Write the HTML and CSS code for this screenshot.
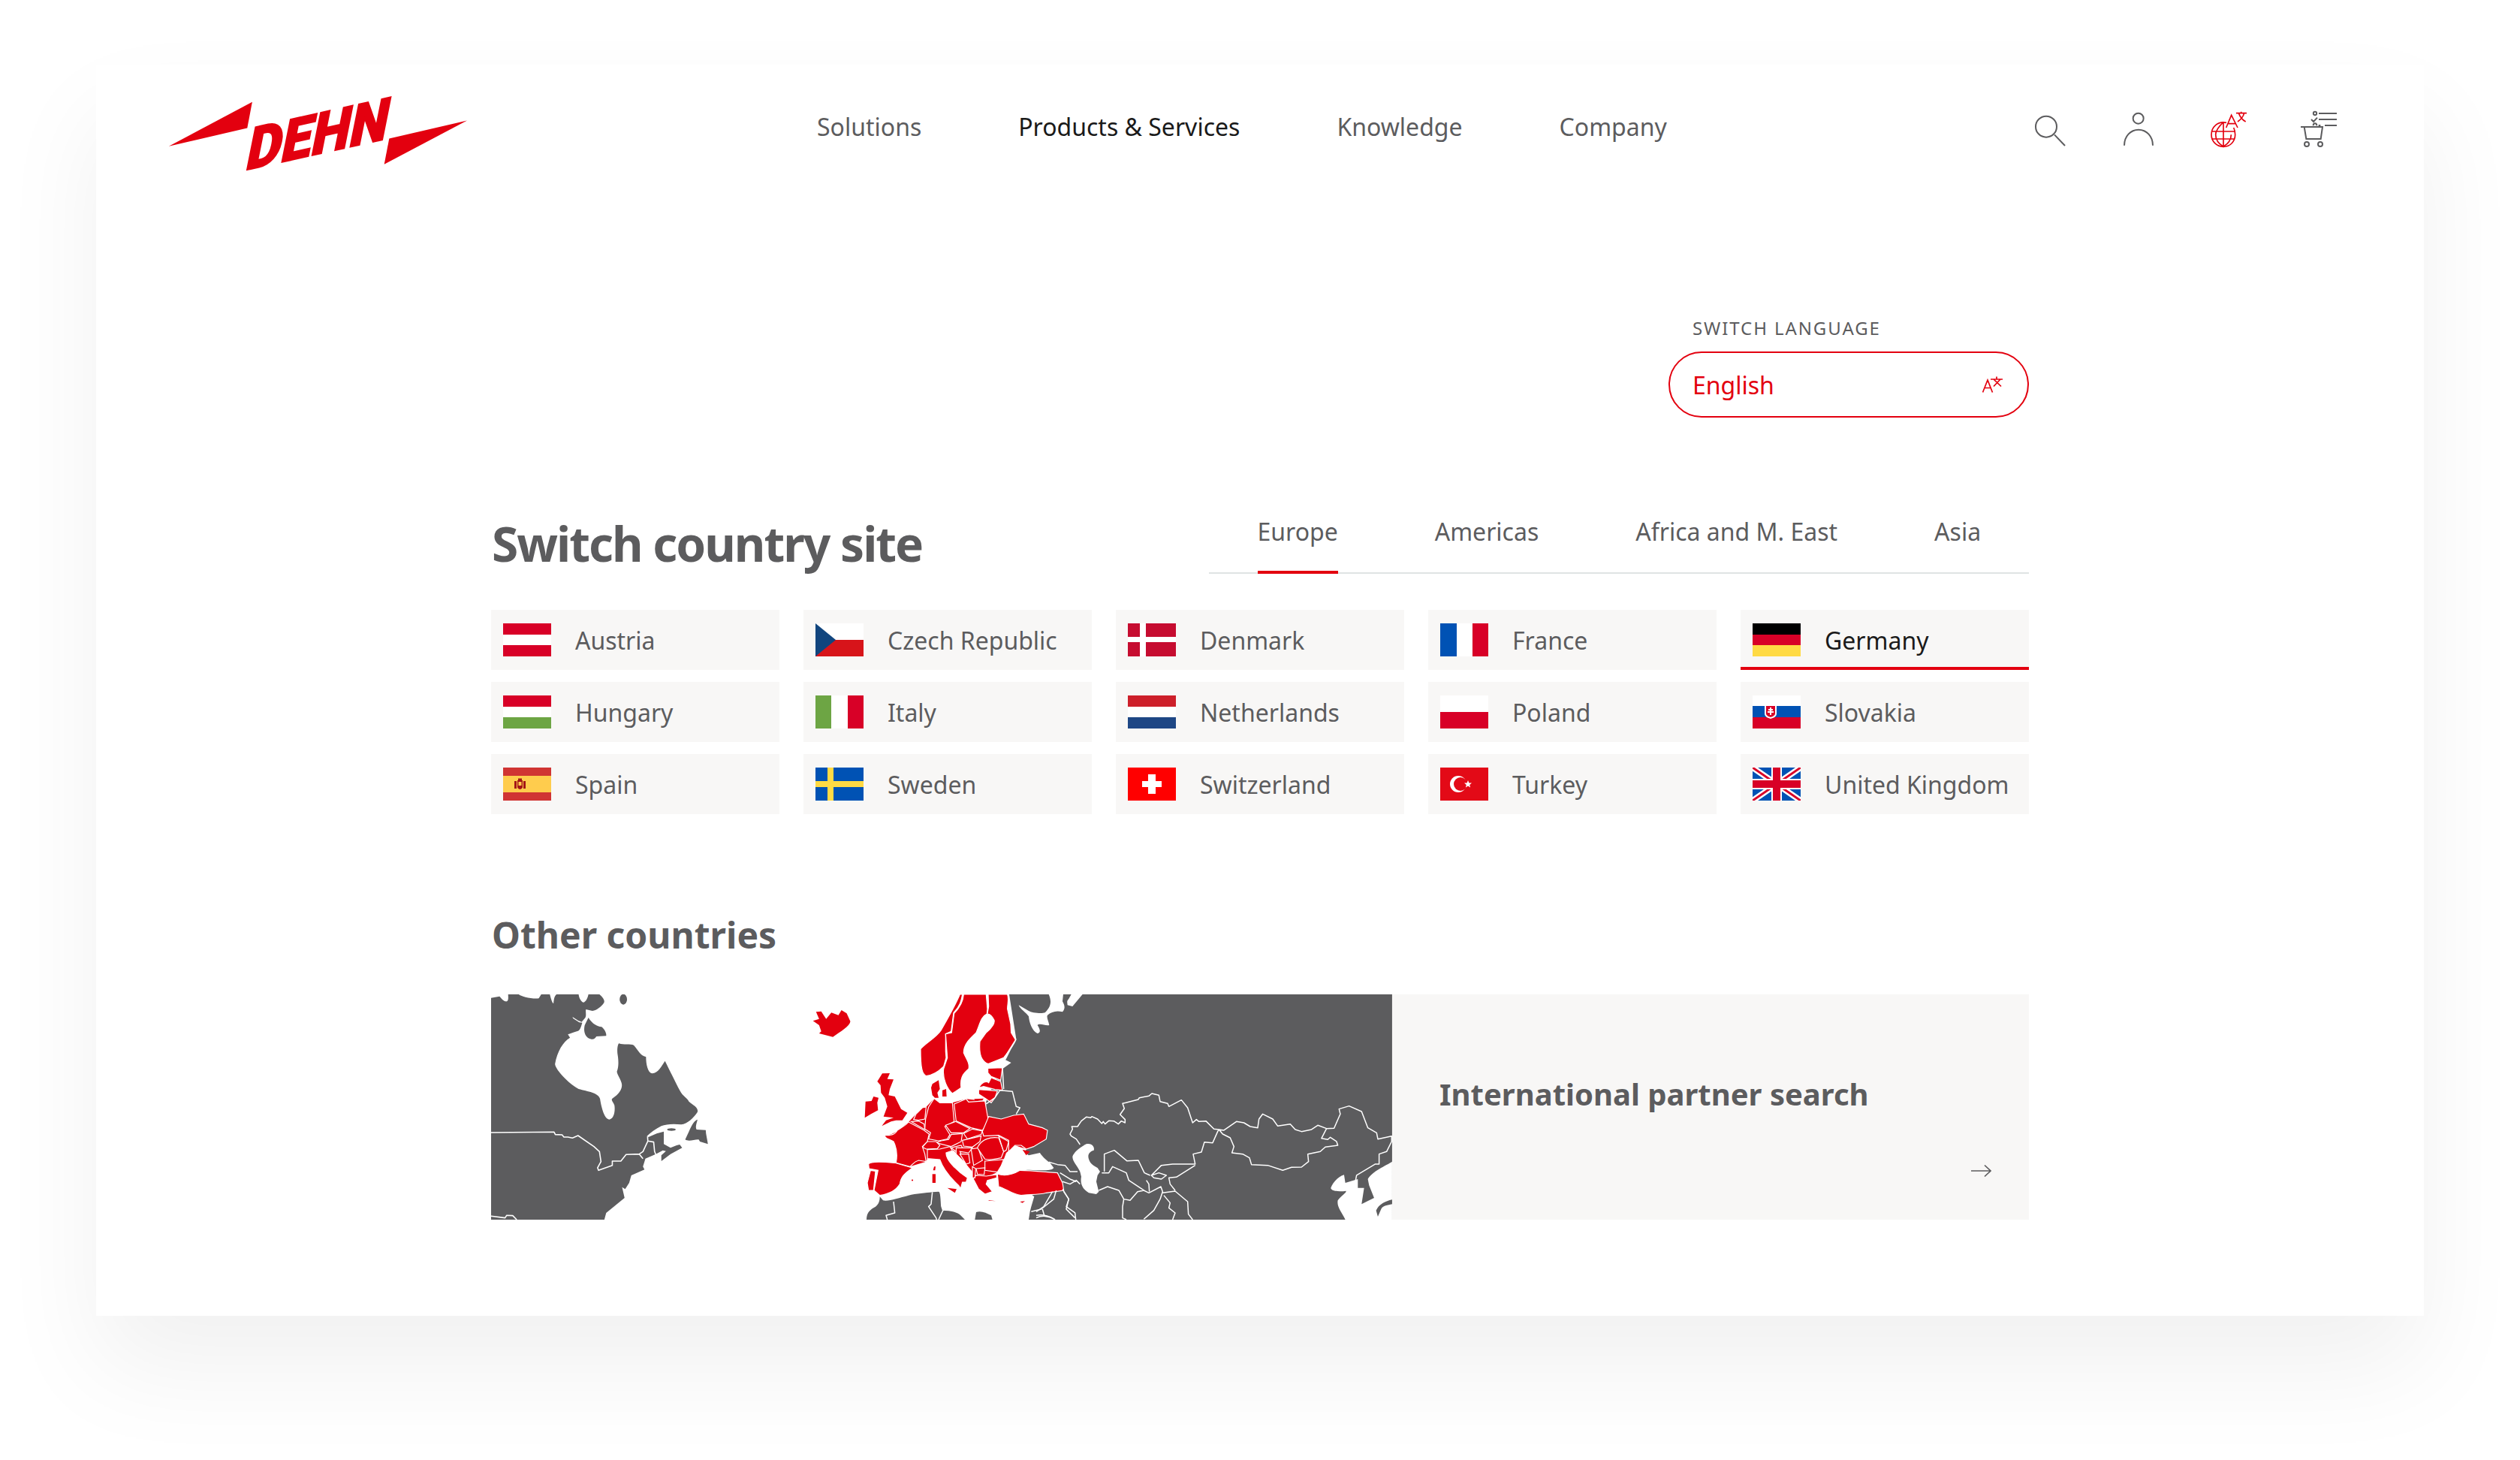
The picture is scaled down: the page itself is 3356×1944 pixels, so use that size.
FILE: index.html
```html
<!DOCTYPE html>
<html lang="en">
<head>
<meta charset="utf-8">
<title>DEHN – Switch country site</title>
<link rel="stylesheet" href="styles.css">
</head>
<body>
<div class="card">
  <header class="header">
    <a class="logo" href="#" aria-label="DEHN">
      <svg class="logo-svg" viewBox="225 128 398 100">
        <polygon class="red" points="224.800,194.800 335.900,135.800 329.300,170.600"/>
        <polygon class="red" points="622,160.600 518.300,184.500 511.700,218.700"/>
        <text class="logo-text" transform="matrix(.9 -.2 -.2 1 325 227)">DEHN</text>
      </svg>
    </a>
    <nav class="nav">
      <a href="#">Solutions</a>
      <a href="#" class="is-active">Products &amp; Services</a>
      <a href="#">Knowledge</a>
      <a href="#">Company</a>
    </nav>
    <div class="icons">
      <svg class="icon" viewBox="126 72 168 168"><circle class="ln" cx="195" cy="146" r="42"/><path class="ln" d="M228 178L270 222"/></svg>
      <svg class="icon" viewBox="486 72 168 168"><circle class="ln" cx="563" cy="113" r="21"/><path class="ln" d="M507 221C507 185 532 158 564 158C596 158 621 185 621 221"/></svg>
      <svg class="icon" viewBox="846 72 168 168">
        <path class="ln-red" d="M915 130C880 122 855 148 855 178C855 205 876 226 903 226C930 226 950 205 950 178C950 168 948 158 944 150"/>
        <path class="ln-red" d="M903 128V226M856 165H948M856 195H948M903 128C880 150 872 165 872 178C872 198 885 215 903 226C921 215 934 198 934 178"/>
        <path class="ln-red" d="M914 150L935 100L960 150M921 134H950M954 92H996M974 86V92M964 92C970 108 980 120 992 126M986 92C982 108 972 118 960 126"/>
      </svg>
      <svg class="icon" viewBox="1206 72 168 168">
        <circle class="ln" cx="1269" cy="93" r="6.500"/><path class="ln" d="M1284 93H1356M1284 117H1356M1308 141H1356M1254 117L1263 126L1278 110M1262 142C1262 130 1276 130 1276 142M1283 141H1291"/>
        <path class="ln" d="M1212 147H1226L1234 195H1292L1299 147H1226"/>
        <circle class="ln" cx="1236" cy="216" r="9"/><circle class="ln" cx="1290" cy="216" r="9"/>
      </svg>
    </div>
  </header>

  <main class="main">
    <div class="lang">
      <div class="lang-label">SWITCH LANGUAGE</div>
      <div class="lang-select">
        <span>English</span>
        <svg class="lang-icon" viewBox="0 0 28 22"><path class="ln-thin" d="M.5 21.500L7 5L13.500 21.500M3 15.500H11M11 4H27M19 .5V4M15 4L25 13.500M24 4L15 13.500"/></svg>
      </div>
    </div>

    <section class="head">
      <h1 class="title">Switch country site</h1>
      <div class="tabs">
        <a href="#" class="tab is-active">Europe</a>
        <a href="#" class="tab">Americas</a>
        <a href="#" class="tab">Africa and M. East</a>
        <a href="#" class="tab">Asia</a>
      </div>
    </section>

    <section class="grid">
      <a href="#" class="tile"><svg class="flag" viewBox="0 0 64 44"><rect width="64" height="44" fill="#d80027"/><rect y="15" width="64" height="14" fill="#fff"/></svg>Austria</a>
      <a href="#" class="tile"><svg class="flag" viewBox="0 0 64 44"><rect width="64" height="22" fill="#fff"/><rect y="22" width="64" height="22" fill="#d7141a"/><polygon points="0,0 27,22 0,44" fill="#11457e"/></svg>Czech Republic</a>
      <a href="#" class="tile"><svg class="flag" viewBox="0 0 64 44"><rect width="64" height="44" fill="#c60c30"/><rect x="16" width="8" height="44" fill="#fff"/><rect y="18" width="64" height="7" fill="#fff"/></svg>Denmark</a>
      <a href="#" class="tile"><svg class="flag" viewBox="0 0 64 44"><rect width="22" height="44" fill="#0052b4"/><rect x="22" width="20" height="44" fill="#fff"/><rect x="43" width="21" height="44" fill="#d80027"/></svg>France</a>
      <a href="#" class="tile is-active"><svg class="flag" viewBox="0 0 64 44"><rect width="64" height="15" fill="#000"/><rect y="15" width="64" height="14" fill="#d80027"/><rect y="29" width="64" height="15" fill="#ffda44"/></svg>Germany</a>

      <a href="#" class="tile"><svg class="flag" viewBox="0 0 64 44"><rect width="64" height="15" fill="#d80027"/><rect y="15" width="64" height="14" fill="#fff"/><rect y="29" width="64" height="15" fill="#6da544"/></svg>Hungary</a>
      <a href="#" class="tile"><svg class="flag" viewBox="0 0 64 44"><rect width="21" height="44" fill="#6da544"/><rect x="21" width="22" height="44" fill="#fff"/><rect x="43" width="21" height="44" fill="#d80027"/></svg>Italy</a>
      <a href="#" class="tile"><svg class="flag" viewBox="0 0 64 44"><rect width="64" height="15" fill="#cd1f2a"/><rect y="15" width="64" height="14" fill="#fff"/><rect y="29" width="64" height="15" fill="#1e4785"/></svg>Netherlands</a>
      <a href="#" class="tile"><svg class="flag" viewBox="0 0 64 44"><rect width="64" height="22" fill="#fff"/><rect y="22" width="64" height="22" fill="#d80027"/></svg>Poland</a>
      <a href="#" class="tile"><svg class="flag" viewBox="0 0 64 44"><rect width="64" height="14" fill="#fff"/><rect y="14" width="64" height="15" fill="#0052b4"/><rect y="29" width="64" height="15" fill="#d80027"/><path d="M16 12H32V24C32 28 28 30 24 31C20 30 16 28 16 24Z" fill="#fff"/><path d="M18 14H30V24C30 26.500 27 28 24 29C21 28 18 26.500 18 24Z" fill="#d80027"/><path d="M23 16H25V18H27V20H25V21H28V23H25V26H23V23H20V21H23V20H21V18H23Z" fill="#fff"/></svg>Slovakia</a>

      <a href="#" class="tile"><svg class="flag" viewBox="0 0 64 44"><rect width="64" height="44" fill="#d03433"/><rect y="11" width="64" height="22" fill="#ffcc4d"/><rect x="15" y="18" width="3" height="10" fill="#a41517"/><rect x="27" y="18" width="3" height="10" fill="#a41517"/><path d="M19 17H26V26C26 28 23 29 22.500 29C22 29 19 28 19 26Z" fill="#a41517"/><rect x="20" y="14.500" width="5" height="2.500" fill="#a41517"/><rect x="20.500" y="19" width="4" height="5" fill="#ffcc4d"/></svg>Spain</a>
      <a href="#" class="tile"><svg class="flag" viewBox="0 0 64 44"><rect width="64" height="44" fill="#0052b4"/><rect x="16" width="8" height="44" fill="#ffda44"/><rect y="18" width="64" height="8" fill="#ffda44"/></svg>Sweden</a>
      <a href="#" class="tile"><svg class="flag" viewBox="0 0 64 44"><rect width="64" height="44" fill="#f00"/><rect x="27" y="9" width="10" height="26" fill="#fff"/><rect x="19" y="18" width="26" height="8" fill="#fff"/></svg>Switzerland</a>
      <a href="#" class="tile"><svg class="flag" viewBox="0 0 64 44"><rect width="64" height="44" fill="#e30a17"/><circle cx="24" cy="22" r="11" fill="#fff"/><circle cx="27" cy="22" r="9" fill="#e30a17"/><polygon points="37,17 38.400,20.400 42,20.600 39.200,23 40.100,26.500 37,24.600 33.900,26.500 34.800,23 32,20.600 35.600,20.400" fill="#fff"/></svg>Turkey</a>
      <a href="#" class="tile"><svg class="flag" viewBox="0 0 64 44"><rect width="64" height="44" fill="#0052b4"/><path d="M0 0L64 44M64 0L0 44" stroke="#fff" stroke-width="8"/><path d="M0 0L64 44M64 0L0 44" stroke="#d80027" stroke-width="3"/><rect x="25" width="14" height="44" fill="#fff"/><rect y="15" width="64" height="14" fill="#fff"/><rect x="27" width="10" height="44" fill="#d80027"/><rect y="17" width="64" height="10" fill="#d80027"/></svg>United Kingdom</a>
    </section>

    <h2 class="subtitle">Other countries</h2>

    <section class="other">
      <svg class="map" viewBox="654 1324 1200 300" aria-hidden="true">
        <g transform="translate(640 1310) scale(.408 .3333)">
          <path class="gray" d="M34 56L62 50C70 62 78 72 86 70C92 66 90 50 90 42L125 42C130 50 170 62 190 58L198 42L226 42C230 60 234 78 238 78C240 60 240 50 248 42L320 42C322 60 330 74 336 74C344 72 350 55 352 42L388 42C400 55 406 65 403 75C395 90 380 106 365 108L344 102C342 112 346 125 342 135L330 152L318 146L300 132L302 138L322 154L332 155C328 170 325 185 318 188C305 192 295 198 285 202L292 215C270 230 250 270 243 320C245 345 290 400 320 420C350 430 385 435 390 460C395 500 405 540 420 542C435 540 440 510 437 485C432 470 425 465 430 458C455 440 465 415 460 395C455 375 445 360 445 350C452 330 450 300 447 280C445 260 448 240 452 238C465 245 490 238 500 245C515 265 520 285 540 292C540 320 545 355 560 358C580 355 590 330 602 308C615 340 635 390 650 425C660 450 675 455 680 470C695 485 712 495 708 512C695 535 675 560 655 562C630 558 605 560 590 568C570 580 555 595 543 608L548 612L575 598L598 590L598 640L620 655L640 645L650 642L658 655L620 680L590 708L590 685L605 668L595 665L572 680L538 698L535 710L530 730L535 742L510 755L492 765L485 795L472 820L462 812L470 855L440 885L410 915L404 942L34 942Z"/>
          <path class="gray" d="M352 135C365 160 380 170 395 172C405 180 412 200 410 208L378 210C372 222 365 225 350 215C335 200 338 175 340 165Z"/>
          <ellipse class="gray" cx="466" cy="62" rx="12" ry="21"/>
          <ellipse class="gray" cx="623" cy="582" rx="14" ry="5"/>
          <path class="gray" d="M708 542C700 545 690 560 680 590L668 622C680 632 700 620 712 622L716 630L742 640C740 620 735 600 735 584L705 582C700 570 706 555 708 542Z"/>
          <path class="border ns" d="M34 594L240 592L244 602L266 603L272 612L285 612L300 616L318 606L370 650L388 670L393 710L382 735L385 745L430 725L430 708L458 708L475 682L518 680L530 698M518 680L530 670L546 628L565 632L568 670L572 682M546 628L545 610M34 928L80 935L85 925L105 926L118 942"/>
          <path class="red" d="M1095 112L1112 110L1128 140L1145 115L1168 125L1178 105L1195 118L1207 150C1205 170 1175 190 1150 212L1105 198L1112 190L1105 165L1085 148L1105 140Z"/>
        </g>
        <g transform="translate(1140 1320) scale(.3333)">
          <path class="gray" d="M612 12H2142V912H690L695 880L700 860L712 820L660 780L680 625L610 600L520 500L520 440L580 300L600 270L640 190Z"/>
          <path class="gray" d="M42 912C42 880 60 870 78 860C92 850 95 835 95 820L108 835C130 840 170 825 210 815C240 808 280 805 305 802L330 800C338 800 338 840 340 860L345 875C370 875 405 880 418 895L435 912Z"/>
          <path class="gray" d="M475 912L480 882C500 875 520 885 540 895L545 912Z"/>
          <path class="sea" d="M770 12C782 40 780 60 755 85C740 90 700 85 690 78L650 55C655 70 680 85 690 100C692 125 705 160 725 168C740 165 735 150 725 135C735 125 760 140 772 135C770 120 760 105 765 95C780 82 800 75 825 82C840 65 830 50 825 40L828 12Z"/>
          <path class="sea" d="M860 12H905L865 60L845 55C845 45 840 40 850 30Z"/>
          <path class="sea" d="M585 680C590 660 610 640 625 632C640 615 665 612 680 625L670 640L690 655L735 645C740 655 760 675 775 685L790 705C785 715 760 715 720 715C690 712 660 712 635 728C615 730 595 710 585 680Z"/>
          <path class="sea" d="M865 660C870 645 890 625 920 610C940 605 955 620 950 635C930 640 925 655 930 670C935 690 955 700 965 705L975 720L965 735L960 760L970 800L960 810L930 805C905 790 895 770 900 740L895 720C880 690 865 680 865 660Z"/>
          <path class="sea" d="M590 270L620 285L585 310L525 300L528 290Z"/>

          <path class="red" d="M115 575C155 575 180 545 210 522L240 490L280 462L312 428L335 445L385 445L440 430L515 438L530 500L580 510L670 490L690 530L765 555L760 590L710 620L680 630L635 615L600 645L590 672L565 722L515 745L465 745L465 720L440 690L390 635L360 645L330 665L285 668L280 680L215 700L160 685C165 660 165 630 150 600Z"/>
          <path class="red c" d="M415 12L425 12C420 40 415 60 390 85L380 160L358 170L358 240L360 265L350 300C335 315 310 335 280 338C265 330 258 310 258 230C280 205 320 185 340 155C360 120 395 60 415 12Z"/>
          <path class="red c" d="M430 12L520 12L525 70L523 90C500 100 495 130 480 165C455 190 430 210 430 245C440 270 455 285 450 310C425 330 415 350 420 385L385 408C365 390 345 350 350 310L365 265L358 170L382 165L392 88C415 65 428 40 430 12Z"/>
          <path class="red c" d="M528 12L605 12C612 30 605 50 605 70L618 130L620 165L638 195C625 225 605 245 590 265L528 290C505 280 490 260 495 200L520 165C545 145 555 125 552 115C545 100 535 90 525 90L530 60Z"/>
          <path class="red c" d="M527 307L585 305L578 355L540 340L527 325Z"/>
          <path class="red c" d="M490 385C500 365 520 355 530 365L540 345L578 360L585 395L555 392L510 380Z"/>
          <path class="red c" d="M490 392L530 395L565 398L555 425L540 445L520 430L490 410Z"/>
          <path class="red" d="M472 430L510 428L505 435L475 435Z"/>
          <path class="red" d="M300 385L305 370L330 355L335 390L325 405L330 425L315 425L305 415Z"/>
          <path class="red" d="M345 395L360 390L362 420L345 420Z"/>
          <path class="red" d="M105 328L135 327L125 350L150 352L135 390L130 415L155 420L180 470L205 485L185 515L160 515L140 520L103 538L120 515L150 505L110 500L125 460L115 425L100 405L98 375L85 360Z"/>
          <path class="red" d="M38 440L62 438L70 420L90 425L85 445L88 475L60 490L35 505Z"/>
          <path class="red c" d="M240 490L265 465L280 462L275 510L250 515L230 512Z"/>
          <path class="red c" d="M220 520L250 518L272 530L275 552L245 535Z"/>
          <path class="red c" d="M290 462L312 428L335 445L385 445L392 520L355 540L375 572L365 590L330 597L290 590L298 565L275 550L278 510Z"/>
          <path class="red c" d="M392 450L440 430L450 442L515 438L525 495L530 520L505 555L460 545L400 518Z"/>
          <path class="red c" d="M358 535L398 520L455 548L430 565L380 565Z"/>
          <path class="red c" d="M430 568L465 550L505 558L500 572L445 590Z"/>
          <path class="red c" d="M340 597L370 592L380 572L425 568L420 600L380 620L320 605Z"/>
          <path class="red c" d="M425 595L500 578L495 600L465 622L430 618Z"/>
          <path class="red c" d="M265 622L285 600L320 600L335 615L325 628L280 630Z"/>
          <path class="red c" d="M210 522L272 555L292 570L285 600L265 620L275 650L280 680L250 675C230 680 225 695 215 700L160 685C165 660 165 630 150 600C135 590 115 590 115 575C135 575 155 575 165 555C180 545 200 535 210 522Z"/>
          <path class="red c" d="M285 632L335 630L375 620L385 636L360 645C358 670 395 712 445 745L440 762L425 762L418 788L410 775C385 752 350 715 335 672L285 668Z"/>
          <path class="red" d="M365 785L402 790L395 805Z"/>
          <path class="red" d="M305 730L318 730L318 765L305 765Z"/>
          <path class="red" d="M312 700L318 700L316 715L308 715Z"/>
          <path class="red" d="M222 752L228 752L228 757L222 757Z"/>
          <path class="red c" d="M50 690C55 680 100 680 155 685L225 705C200 725 180 735 175 770C160 795 130 810 95 815L72 795L88 715L52 708Z"/>
          <path class="red c" d="M58 715L78 718L70 795L50 795L45 765Z"/>
          <path class="red c" d="M380 625L420 615L425 625L400 640Z"/>
          <path class="red c" d="M400 625L465 625L450 645L415 640L440 690L400 650Z"/>
          <path class="red c" d="M415 650L450 650L455 685L440 690Z"/>
          <path class="red c" d="M460 630L488 625L505 675L470 695Z"/>
          <path class="red c" d="M485 625C500 590 540 580 570 585L590 640L580 665C560 670 530 675 515 670L495 640Z"/>
          <path class="red c" d="M570 578L610 600L600 635L590 640Z"/>
          <path class="red c" d="M530 500L580 510L630 495L670 490L690 530L745 545L765 555L760 590L710 620L680 630L660 615L635 615L610 640L610 595L570 575L510 578L505 560Z"/>
          <path class="red" d="M665 632L695 640L680 655Z"/>
          <path class="red c" d="M515 678L590 672C583 695 570 715 565 722L515 715Z"/>
          <path class="red c" d="M468 748L480 735L520 738L562 732L562 745L525 755L520 770L545 800L515 810L490 790Z"/>
          <path class="red c" d="M480 708L515 705L512 732L485 730Z"/>
          <path class="red c" d="M465 700L478 708L475 745L465 745Z"/>
          <path class="red c" d="M565 730C600 740 630 730 655 715C700 715 760 722 805 725L825 765L830 795L760 805C725 815 690 810 660 815C620 810 595 785 570 780Z"/>
          <path class="red" d="M530 834L558 838L530 836Z"/>
          <path class="red" d="M655 840L675 838L665 845Z"/>
          <path class="border" d="M520 450L555 425L575 395L625 400L640 460L655 465L640 490M585 305L590 390M640 190L590 270M150 840L155 885L120 895L125 912M305 802L300 850L290 860L320 905L322 912M330 912L345 880L350 870M700 880L740 870L790 830L800 795M830 800L850 830L840 870L875 905M720 905C740 895 770 895 795 912M745 870L752 895"/>
        </g>
        <g transform="translate(1380 1320) scale(.3333)">
          <path class="sea" d="M1177 785C1185 765 1205 740 1230 733L1235 765L1285 750L1285 785L1310 785L1300 850L1350 825L1330 775L1325 750C1340 720 1400 695 1422 680L1422 912L1235 912C1220 880 1200 860 1205 835C1220 815 1240 805 1238 797C1215 800 1180 800 1177 785Z"/>
          <path class="gray" d="M1422 832C1395 838 1370 850 1358 875L1365 900L1378 870C1385 855 1405 855 1422 850Z"/>
          <path class="border" d="M175 612L160 590L140 578L135 570L145 550L142 540L165 540L180 518L200 502L218 505L222 500L245 510L262 528L268 520L275 530L290 517L310 518L328 530L340 518L355 525L355 512L335 492L352 468L345 448L358 445L408 432L412 425L450 418L462 408L490 415L495 440L525 448L530 460L580 434L605 465L625 525L640 512L650 520L678 518L710 550L730 552L745 570L775 585L790 620L782 645L825 650L852 665L860 692L925 695L985 715L1020 703L1060 702L1088 680L1085 650L1135 640L1155 622L1205 615L1200 600L1175 583L1165 592L1140 587L1160 548L1125 535L1100 552L1060 560L1035 552L1015 530L965 538L945 510L905 490L890 510L885 545L855 540L830 525L800 520L750 555L730 552L725 560L705 605L672 602L660 642L627 650L635 690L545 690L500 695L460 735M272 720L272 650L312 635L362 677L408 675L432 725L455 735M262 725L290 725L305 700L360 725L370 755L430 795M250 795L285 780L330 795L350 830L375 835L405 800L430 795L450 805L498 780L505 800L495 830L470 875L430 910M105 790L130 830L120 860L155 885L158 912M350 830L345 860L345 905L360 912M505 805L555 798L605 840L608 890L625 912M510 815L535 845L530 865L555 885L545 912M460 735L490 725L520 735L500 750L470 745ZM635 695L560 742L530 745L535 770L555 795M440 755L450 770L452 800M1160 548L1190 547L1215 490L1210 470L1250 458L1300 480L1325 545L1360 565L1365 590L1420 578L1420 600L1400 640L1370 650L1370 690L1355 690L1280 735L1275 760M50 682L85 692L115 695L135 720L165 720M95 725L135 750L160 760M105 760L135 770L160 755L175 770M65 800L30 860L0 880M0 895C30 890 60 900 75 912"/>
        </g>
      </svg>
      <a href="#" class="panel">
        <span class="panel-title">International partner search</span>
        <svg class="arrow" viewBox="0 0 28 20"><path class="ln-thin" d="M1 10H27M19 2.500L27 10L19 17.500"/></svg>
      </a>
    </section>
  </main>
</div>
</body>
</html>
```
FILE: styles.css
```css
* { box-sizing: border-box; }
html, body { margin: 0; padding: 0; background: #fff; }
body {
  font-family: "Noto Sans", "Open Sans", sans-serif;
  color: #5c5c5e;
  font-size: 32px;
  overflow: hidden;
  height: 1944px;
}
a { color: inherit; text-decoration: none; }

.card {
  width: 3100px;
  height: 1666px;
  margin: 86px 0 0 128px;
  background: #fff;
  box-shadow: 0 70px 130px rgba(0, 0, 0, .06);
}

.header {
  display: flex;
  align-items: flex-start;
  padding: 42px 110px 0 97px;
}
.logo { display: block; height: 100px; }
.logo-svg { display: block; width: 398px; height: 100px; overflow: visible; }
.logo-text {
  font-family: Roboto, "Liberation Sans", sans-serif;
  font-weight: 900;
  font-size: 80px;
  fill: #e3000f;
  stroke: #e3000f;
  stroke-width: 2px;
}

.nav {
  display: flex;
  gap: 129px;
  margin-left: 465px;
  line-height: 48px;
  margin-top: 17px;
}
.nav .is-active { color: #1a1a1a; }

.icons { display: flex; gap: 64px; margin-left: auto; margin-top: 16px; }
.icon { display: block; width: 56px; height: 56px; overflow: visible; }

.red { fill: #e3000f; }
.c { stroke: #fff; stroke-width: 3.500; }
.gray { fill: #5c5c5e; }
.sea { fill: #fff; }
.border { fill: none; stroke: #fff; stroke-width: 4.500; stroke-linejoin: round; }
.ns { vector-effect: non-scaling-stroke; stroke-width: 1.600; }
.ln { fill: none; stroke: #5c5c5e; stroke-width: 6; }
.ln-red { fill: none; stroke: #e3000f; stroke-width: 5; }
.ln-thin { fill: none; stroke: currentColor; stroke-width: 1.700; }

.main { width: 2048px; margin-left: 526px; }

.lang {
  width: 480px;
  margin: 195px 0 0 auto;
}
.lang-label {
  padding-left: 32px;
  font-size: 24px;
  line-height: 28px;
  letter-spacing: 1.900px;
  margin-bottom: 17px;
}
.lang-select {
  display: flex;
  align-items: center;
  justify-content: space-between;
  height: 88px;
  padding: 0 32px 0 30px;
  border: 2.500px solid #e3000f;
  border-radius: 44px;
  color: #e3000f;
  font-size: 32px;
}
.lang-icon { display: block; width: 28px; height: 22px; }

.head {
  display: flex;
  justify-content: space-between;
  align-items: flex-end;
  margin-top: 128px;
}
.title {
  margin: 0 0 0 1px;
  font-size: 64px;
  font-weight: 700;
  line-height: 80px;
  letter-spacing: -2px;
}
.tabs {
  display: flex;
  flex: none;
  width: 1092px;
  border-bottom: 2px solid #dfe3e3;
  white-space: nowrap;
}
.tab {
  flex: none;
  margin: 0 64.500px -2px;
  padding-bottom: 28px;
  line-height: 48px;
  border-bottom: 4px solid transparent;
}
.tab.is-active { border-bottom-color: #e3000f; }

.grid {
  display: grid;
  grid-template-columns: repeat(5, 384px);
  grid-auto-rows: 80px;
  gap: 16px 32px;
  margin-top: 48px;
}
.tile {
  display: flex;
  align-items: center;
  gap: 32px;
  padding: 0 16px;
  background: #f8f7f6;
}
.tile.is-active {
  padding-top: 4px;
  color: #1a1a1a;
  border-bottom: 4px solid #e3000f;
}
.flag { display: block; flex: none; width: 64px; height: 44px; }

.subtitle {
  margin: 129px 0 47px 1px;
  font-size: 48px;
  font-weight: 700;
  line-height: 64px;
}

.other { display: flex; height: 300px; }
.map { display: block; flex: none; width: 1200px; height: 300px; }
.panel {
  flex: 1;
  display: flex;
  flex-direction: column;
  justify-content: space-between;
  padding: 104px 48px 0 63px;
  background: #f8f7f6;
}
.panel-title { font-size: 40px; font-weight: 700; line-height: 58px; }
.arrow { display: block; align-self: flex-end; width: 28px; height: 20px; margin: 0 2px 55px 0; }
```
